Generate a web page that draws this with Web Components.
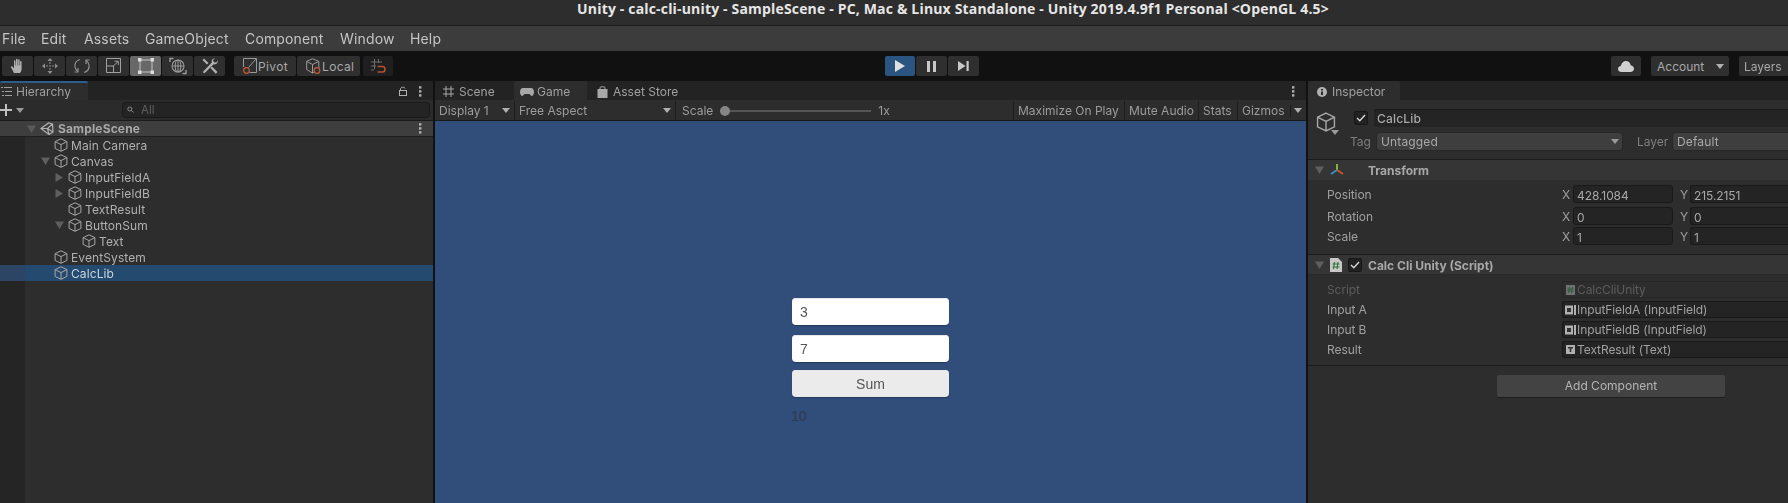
<!DOCTYPE html>
<html>
<head>
<meta charset="utf-8">
<title>Unity</title>
<style>
    html, body { margin: 0; padding: 0; background: #111; }
    body { width: 1788px; height: 503px; overflow: hidden; font: 12px Inter, sans-serif; color: #b0b0b0; }
    .panels { display: flex; height: 422px; background: #111; gap: 2px; }
    .panels, ui-menubar, ui-toolbar { filter: blur(.3px); }
</style>
</head>
<body>
<ui-titlebar>Unity - calc-cli-unity - SampleScene - PC, Mac &amp; Linux Standalone - Unity 2019.4.9f1 Personal &lt;OpenGL 4.5&gt;</ui-titlebar>
<ui-menubar></ui-menubar>
<ui-toolbar></ui-toolbar>
<div class="panels">
    <ui-hierarchy></ui-hierarchy>
    <ui-game></ui-game>
    <ui-inspector></ui-inspector>
</div>
<script>
"use strict";

const cube = (size = 14, color = "#b0b0b0") => `<svg style="display:block" width="${size}" height="${size}" viewBox="0 0 14 14" fill="none" stroke="${color}" stroke-width="1"><path d="M7 .8 12.9 3.6V10.4L7 13.3 1.1 10.4V3.6Z M1.1 3.6 7 6.6 12.9 3.6 M7 6.6V13.3"/></svg>`;
const arrowDown = (color = "#5f5f5f") => `<svg width="9" height="8" viewBox="0 0 9 8"><path d="M0 .5H9L4.5 8Z" fill="${color}"/></svg>`;
const arrowRight = `<svg width="8" height="9" viewBox="0 0 8 9"><path d="M.5 0V9L8 4.5Z" fill="#5f5f5f"/></svg>`;
const caret = (color = "#b0b0b0") => `<svg width="8" height="5" viewBox="0 0 8 5"><path d="M0 0H8L4 5Z" fill="${color}"/></svg>`;
const dots = `<svg width="3" height="11" viewBox="0 0 3 11" fill="#b0b0b0"><rect width="2.4" height="2.4" y=".2"/><rect width="2.4" height="2.4" y="4.2"/><rect width="2.4" height="2.4" y="8.2"/></svg>`;
const check = `<svg width="10" height="8" viewBox="0 0 10 8" fill="none" stroke="#d8d8d8" stroke-width="1.4"><path d="M1 4 3.8 6.8 9 1"/></svg>`;

const tools = {
    hand: `<svg width="18" height="18" viewBox="0 0 18 18" fill="#b0b0b0"><path d="M5 16 2 10.2c-.4-.9.8-1.5 1.4-.7L5 11.3V4c0-1 1.5-1 1.5 0v4.5H7V2.6c0-1 1.6-1 1.6 0v5.9h.5V3c0-1 1.5-1 1.5 0v5.5h.5V4.7c0-1 1.5-1 1.5 0V12c0 2-.8 3-1.6 4Z"/></svg>`,
    move: `<svg width="18" height="18" viewBox="0 0 18 18" fill="#8f8f8f"><path d="M9 1 11.5 4H6.5ZM9 17 6.5 14H11.5ZM1 9 4 6.5V11.5ZM17 9 14 11.5V6.5Z"/><path d="M8.5 5H9.5V7H8.5ZM8.5 8H9.5V10H8.5ZM8.5 11H9.5V13H8.5ZM5 8.5H7V9.5H5ZM11 8.5H13V9.5H11Z"/></svg>`,
    rotate: `<svg width="18" height="18" viewBox="0 0 18 18" fill="none" stroke="#8f8f8f" stroke-width="1.2"><path d="M7 2.5C3.5 3.5 1.5 6.5 2 10c.3 2 1.4 3.5 3 4.5"/><path d="M11 15.5c3.5-1 5.5-4 5-7.5-.3-2-1.4-3.5-3-4.5"/><path d="M5 11v4H1.5M13 7V3h3.5"/></svg>`,
    scale: `<svg width="16" height="16" viewBox="0 0 16 16" fill="none" stroke="#a0a0a0" stroke-width="1"><path d="M.5 .5H14.5V14.5H.5Z"/><path d="M.5 8H7.5V14.5"/><path d="M7 8.5 12 3.5M8.5 3.2H12.3V7"/></svg>`,
    rect: `<svg width="16" height="16" viewBox="0 0 16 16" fill="#dcdcdc"><path d="M2 1.5h12v1H2zM2 13.5h12v1H2zM1.5 2h1v12h-1zM13.5 2h1v12h-1z" opacity=".8"/><rect width="3.5" height="3.5"/><rect x="12.5" width="3.5" height="3.5"/><rect y="12.5" width="3.5" height="3.5"/><rect x="12.5" y="12.5" width="3.5" height="3.5"/></svg>`,
    transform: `<svg width="18" height="18" viewBox="0 0 18 18" fill="none" stroke="#9a9a9a" stroke-width="1.1"><circle cx="9" cy="9" r="6"/><path d="M3 9H15M9 3V15"/><ellipse cx="9" cy="9" rx="2.8" ry="6"/><path d="M1 5V1.5H4.5M17 13V16.5H13.5" stroke-width="1.4"/></svg>`,
    custom: `<svg width="18" height="18" viewBox="0 0 18 18" fill="#b0b0b0"><path d="M2.5 15.8 1.8 15l9-9.500c-.5-1.800.3-3.800 3-4.200l-1.800 2 1.200 2.300 2.300-.3 1.300-2c.5 2.600-1.800 4.800-4.200 4L3.500 16.200Z"/><path d="M3 1.5 7.5 6 6 7.5 1.5 3ZM11 9.5 16.5 15l-1.800 1.800L9.500 11Z"/></svg>`,
    pivot: `<svg width="14" height="16" viewBox="0 0 14 16" fill="none"><path d="M.5 9V.5H13.5V14.5H6.5" stroke="#9a9a9a"/><path d="M5.5 9.5 13 1" stroke="#9a9a9a"/><circle cx="3.5" cy="12.5" r="2.8" stroke="#c65a33" stroke-width="1.2"/></svg>`,
    local: `<svg width="15" height="16" viewBox="0 0 15 16" fill="none" stroke="#9a9a9a"><path d="M6.5 .7 12.8 3.4V11.500L6.5 15 .7 11.500V3.400ZM.7 3.400 6.5 6.500 12.800 3.400M6.500 6.500V15"/><circle cx="11" cy="12.500" r="2.800" fill="#2f2f2f" stroke="#c65a33" stroke-width="1.200"/></svg>`,
    snap: `<svg width="15" height="15" viewBox="0 0 15 15" fill="none"><path d="M3.5 0V10M7.5 0V4M0 3H11M0 7H5M0 11H3" stroke="#6e6e6e"/><path d="M6.5 7.5H11.5C14.8 7.5 14.8 13 11.5 13H6.5" stroke="#b5502c" stroke-width="1.6"/></svg>`,
    play: `<svg width="10" height="12" viewBox="0 0 10 12"><path d="M0 0V12L10 6Z" fill="#e0e0e0"/></svg>`,
    pause: `<svg width="9" height="11" viewBox="0 0 9 11" fill="#c8c8c8"><rect width="3" height="11"/><rect x="6" width="3" height="11"/></svg>`,
    step: `<svg width="11" height="10" viewBox="0 0 11 10" fill="#c8c8c8"><path d="M0 0V10L7.5 5Z"/><rect x="8.5" width="2.2" height="10"/></svg>`,
    cloud: `<svg width="16" height="11" viewBox="0 0 16 11"><path d="M3.5 11C1.5 11 0 9.7 0 8s1.2-2.9 2.8-3C3.3 2 5.5 0 8 0s4.300 1.700 4.700 4.200C14.600 4.400 16 5.900 16 7.700 16 9.600 14.500 11 12.500 11Z" fill="#d0d0d0"/></svg>`
};

class UiTitlebar extends HTMLElement {
    constructor() {
        super();
        this.attachShadow({mode: "open"}).innerHTML = `
            <style>
                :host { display: block; height: 25px; background: #2d2d2d; padding-left: 118px; border-bottom: 1px solid #1c1c1c; }
                span { display: block; text-align: center; font: 700 14px/17px "Open Sans", sans-serif; letter-spacing: .17px; color: #e6e6e6; }
            </style>
            <span><slot></slot></span>`;
    }
}

class UiMenubar extends HTMLElement {
    constructor() {
        super();
        const items = [["File", 39], ["Edit", 43], ["Assets", 61], ["GameObject", 100], ["Component", 95], ["Window", 70], ["Help", 50]];
        this.attachShadow({mode: "open"}).innerHTML = `
            <style>
                :host { display: flex; height: 25px; background: #3c3c3c; padding-left: 2px; font: 14px/25px Inter, sans-serif; letter-spacing: .15px; color: #c4c4c4; }
            </style>
            ${items.map(i => `<span style="width:${i[1]}px">${i[0]}</span>`).join("")}`;
    }
}

class UiToolButton extends HTMLElement {
    static get observedAttributes() { return ["w"]; }
    constructor() {
        super();
        this.attachShadow({mode: "open"}).innerHTML = `
            <style>
                :host { display: flex; flex: none; align-items: center; justify-content: center; height: 20px; box-sizing: border-box; background: var(--bg, #2f2f2f); border-radius: 2px; overflow: hidden; color: #a8a8a8; font: 12px Inter, sans-serif; }
                :host([text]) { justify-content: flex-start; padding-left: 9px; gap: 1px; letter-spacing: .35px; }
            </style>
            <slot></slot>`;
    }
    attributeChangedCallback(name, oldVal, newVal) { this.style.width = newVal + "px"; }
}

class UiToolbar extends HTMLElement {
    constructor() {
        super();
        const btn = (w, icon, bg = "", attr = "") => `<ui-tool-button w="${w}" ${attr} style="${bg ? `--bg:${bg}` : ""}">${icon}</ui-tool-button>`;
        this.attachShadow({mode: "open"}).innerHTML = `
            <style>
                :host { display: flex; align-items: center; height: 30px; background: #111; padding-left: 2px; box-sizing: border-box; }
                .g { display: flex; gap: 1px; flex: none; }
                .sp { flex: none; }
            </style>
            <div class="g">
                ${btn(31, tools.hand)}${btn(31, tools.move)}${btn(31, tools.rotate)}${btn(31, tools.scale)}${btn(31, tools.rect, "#686868")}${btn(31, tools.transform)}${btn(31, tools.custom)}
            </div>
            <div class="sp" style="width:9px"></div>
            <div class="g">
                ${btn(62, tools.pivot + "Pivot", "", "text")}${btn(63, tools.local + "Local", "", "text")}
                <div class="sp" style="width:1px"></div>
                ${btn(30, tools.snap, "#1f1f1f")}
            </div>
            <div class="sp" style="width:492px"></div>
            <div class="g">
                ${btn(30, tools.play, "#2a5580")}${btn(31, tools.pause)}${btn(31, tools.step)}
            </div>
            <div class="sp" style="width:632px"></div>
            ${btn(30, tools.cloud)}
            <div class="sp" style="width:10px"></div>
            ${btn(78, `<span style="flex:1;padding-left:6px">Account</span>${caret()}<span style="width:5px"></span>`)}
            <div class="sp" style="width:10px"></div>
            ${btn(50, `<span style="flex:1;padding-left:5px">Layers</span>`)}`;
    }
}

class UiTabs extends HTMLElement {
    constructor() {
        super();
        this.attachShadow({mode: "open"}).innerHTML = `
            <style>
                :host { display: flex; height: 19px; background: #232323; align-items: flex-end; flex: none; }
                .end { margin-left: auto; display: flex; align-items: center; height: 19px; padding-top: 1px; box-sizing: border-box; }
            </style>
            <slot></slot>
            <div class="end"><slot name="end"></slot></div>`;
    }
}

class UiTab extends HTMLElement {
    constructor() {
        super();
        this.attachShadow({mode: "open"}).innerHTML = `
            <style>
                :host { display: flex; align-items: center; gap: 5px; height: 19px; box-sizing: border-box; padding-top: 2px; color: #a0a0a0; font: 12px Inter, sans-serif; border-radius: 2px 2px 0 0; }
                :host([active]) { background: #2d2d2d; }
                :host([accent]) { border-top: 2px solid #2b5d8f; padding-top: 0; }
            </style>
            <slot></slot>`;
    }
}

class UiTreeRow extends HTMLElement {
    constructor() {
        super();
        const depth = +this.getAttribute("depth");
        const open = this.getAttribute("open");
        const tri = open === "down" ? arrowDown() : open === "right" ? arrowRight : "";
        this.attachShadow({mode: "open"}).innerHTML = `
            <style>
                :host { display: flex; align-items: center; height: 16px; font: 12px Inter, sans-serif; color: #b0b0b0; padding-left: ${41 + 14 * depth}px; }
                :host([selected]) { background: linear-gradient(to right, #2c4565 25px, #244b6f 25px); color: #c8d4de; }
                .t { width: 13px; display: flex; align-items: center; }
                .i { width: 14px; height: 14px; margin-right: 3px; }
                span { letter-spacing: .1px; }
            </style>
            <div class="t">${tri}</div>
            <div class="i">${cube(14, "#a6a6a6")}</div>
            <span><slot></slot></span>`;
    }
}

class UiHierarchy extends HTMLElement {
    constructor() {
        super();
        this.attachShadow({mode: "open"}).innerHTML = `
            <style>
                :host { display: flex; flex-direction: column; width: 433px; flex: none; background: #2d2d2d; }
                ui-tab { width: 88px; padding-left: 1px; box-sizing: border-box; gap: 4px; }
                .lock { display: flex; gap: 11px; padding-right: 11px; align-items: center; }
                .bar { display: flex; align-items: center; height: 21px; box-sizing: border-box; background: #2b2b2b; border-bottom: 1px solid #1b1b1b; flex: none; }
                .plus { display: flex; gap: 4px; align-items: center; width: 122px; flex: none; }
                .search { width: 308px; height: 16px; box-sizing: border-box; background: #242424; border: 1px solid #191919; border-radius: 4px; display: flex; align-items: center; color: #5e5e5e; font-size: 11.5px; padding-left: 4px; gap: 5px; }
                .scene { display: flex; align-items: center; height: 16px; box-sizing: border-box; background: #3e3e3e; border-bottom: 1px solid #1e1e1e; font-weight: 700; color: #a8a8a8; padding-left: 27px; flex: none; letter-spacing: .15px; }
                .scene .t { width: 13px; display: flex; }
                .scene .d { margin-left: auto; padding-right: 11px; display: flex; }
                .list { flex: 1; background: linear-gradient(to right, #252525 25px, #2d2d2d 25px); }
            </style>
            <ui-tabs>
                <ui-tab active accent>
                    <svg width="11" height="9" viewBox="0 0 11 9" fill="#a0a0a0"><rect width="2" height="1" /><rect x="3" width="8" height="1"/><rect x="1" y="4" width="2" height="1"/><rect x="4" y="4" width="7" height="1"/><rect x="1" y="8" width="2" height="1"/><rect x="4" y="8" width="7" height="1"/></svg>
                    Hierarchy
                </ui-tab>
                <div slot="end" class="lock">
                    <svg width="9" height="10" viewBox="0 0 9 10" fill="none" stroke="#b0b0b0"><rect x=".5" y="4.5" width="7" height="5"/><path d="M1.5 4.5V3C1.5 1 5.5 .5 6 2.5"/></svg>
                    ${dots}
                </div>
            </ui-tabs>
            <div class="bar">
                <div class="plus"><svg width="12" height="12" viewBox="0 0 12 12" fill="#c0c0c0"><path d="M5 0H7V5H12V7H7V12H5V7H0V5H5Z"/></svg>${caret("#9a9a9a")}</div>
                <div class="search">
                    <svg width="9" height="8" viewBox="0 0 9 8" fill="none" stroke="#8c8c8c"><circle cx="2.8" cy="3" r="2"/><path d="M4.5 4.5 6.5 6.5"/></svg>
                    All
                </div>
            </div>
            <div class="scene">
                <div class="t">${arrowDown("#5a5a5a")}</div>
                <svg width="14" height="13" viewBox="0 0 14 13" fill="none" stroke="#b0b0b0" stroke-width="1.2"><path d="M1 6.5 8.5 1 12.5 2 13 10 9 12.5ZM1 6.5H7.5L12.5 2M7.5 6.5 9 12.5M7.5 6.5 13 10"/></svg>
                <span style="margin-left:4px">SampleScene</span>
                <div class="d">${dots}</div>
            </div>
            <div class="list">
                <ui-tree-row depth="0">Main Camera</ui-tree-row>
                <ui-tree-row depth="0" open="down">Canvas</ui-tree-row>
                <ui-tree-row depth="1" open="right">InputFieldA</ui-tree-row>
                <ui-tree-row depth="1" open="right">InputFieldB</ui-tree-row>
                <ui-tree-row depth="1">TextResult</ui-tree-row>
                <ui-tree-row depth="1" open="down">ButtonSum</ui-tree-row>
                <ui-tree-row depth="2">Text</ui-tree-row>
                <ui-tree-row depth="0">EventSystem</ui-tree-row>
                <ui-tree-row depth="0" selected>CalcLib</ui-tree-row>
            </div>`;
    }
}

class UiGameWidget extends HTMLElement {
    constructor() {
        super();
        this.attachShadow({mode: "open"}).innerHTML = `
            <style>
                :host { display: flex; align-items: center; width: 157px; height: 27px; box-sizing: border-box; background: #fff; border-radius: 4px; padding-left: 8px; font: 14px "Liberation Sans", sans-serif; color: #555; box-shadow: inset 0 1px 0 #e6e6e6, 0 1px 1px #26395a; }
                :host([button]) { background: #ebebeb; justify-content: center; padding: 0; color: #555; }
            </style>
            <slot></slot>`;
    }
}

class UiGame extends HTMLElement {
    constructor() {
        super();
        this.attachShadow({mode: "open"}).innerHTML = `
            <style>
                :host { display: flex; flex-direction: column; width: 871px; flex: none; background: #232323; }
                .bar { display: flex; height: 21px; padding-top: 1px; background: #2d2d2d; flex: none; font: 12px/20px Inter, sans-serif; color: #9c9c9c; border-bottom: 1px solid #1a1a1a; box-sizing: border-box; }
                .c { display: flex; align-items: center; box-sizing: border-box; padding-left: 4px; border-right: 1px solid #1c1c1c; flex: none; white-space: nowrap; }
                .c > svg { margin-left: auto; margin-right: 4px; }
                .slider { flex: none; width: 150px; height: 2px; background: #555; position: relative; margin: 0 7px 0 8px; align-self: center; }
                .thumb { position: absolute; left: -1px; top: -4px; width: 10px; height: 10px; border-radius: 50%; background: #858585; }
                .giz { width: 1px; height: 12px; background: #1c1c1c; margin-left: 5px; }
                .view { flex: 1; background: #314d79; display: flex; flex-direction: column; align-items: flex-start; padding: 177px 0 0 357px; }
                ui-game-widget + ui-game-widget { margin-top: 10px; }
                .sum { margin-top: 8px !important; }
                .res { margin: 11px 0 0 -1px; font: 14px "Liberation Sans", sans-serif; color: #2f3a4e; }
            </style>
            <ui-tabs>
                <ui-tab style="width:79px;padding-left:8px">
                    <svg width="11" height="11" viewBox="0 0 11 11" stroke="#a8a8a8" fill="none"><path d="M3 0V11M8 0V11M0 3H11M0 8H11"/></svg>Scene
                </ui-tab>
                <ui-tab active style="width:73px;padding-left:6px;gap:3px">
                    <svg width="14" height="8" viewBox="0 0 14 8" fill="#a8a8a8"><path d="M3 0H11C13 0 14 2 14 4C14 6 13 8 11.5 8L9.5 6H4.5L2.5 8C1 8 0 6 0 4C0 2 1 0 3 0Z"/></svg>Game
                </ui-tab>
                <ui-tab style="padding-left:10px">
                    <svg width="11" height="12" viewBox="0 0 11 12" fill="#a8a8a8"><path d="M.5 3H10.5V12H.5Z"/><path d="M3 3V1.5C3 .5 8 .5 8 1.5V3" fill="none" stroke="#a8a8a8"/></svg>Asset Store
                </ui-tab>
                <div slot="end" style="padding-right:11px;display:flex">${dots}</div>
            </ui-tabs>
            <div class="bar">
                <div class="c" style="width:80px">Display 1${caret()}</div>
                <div class="c" style="width:161px">Free Aspect${caret()}</div>
                <div class="c" style="width:336px;border:0;padding-left:6px">Scale
                    <div class="slider"><div class="thumb"></div></div>1x</div>
                <div class="c" style="margin-left:auto;width:112px;border-left:1px solid #1c1c1c">Maximize On Play</div>
                <div class="c" style="width:74px">Mute Audio</div>
                <div class="c" style="width:39px">Stats</div>
                <div class="c" style="width:68px;border:0">Gizmos<div class="giz"></div>${caret()}</div>
            </div>
            <div class="view">
                <ui-game-widget>3</ui-game-widget>
                <ui-game-widget>7</ui-game-widget>
                <ui-game-widget class="sum" button>Sum</ui-game-widget>
                <div class="res">10</div>
            </div>`;
    }
}

class UiProp extends HTMLElement {
    constructor() {
        super();
        this.attachShadow({mode: "open"}).innerHTML = `
            <style>
                :host { display: flex; align-items: flex-start; height: 20px; padding-left: 19px; font: 12px Inter, sans-serif; color: #a0a0a0; letter-spacing: -.08px; }
                :host([dim]) { color: #5c5c5c; }
                .l { width: 235px; flex: none; line-height: 17px; }
                .v { flex: 1; display: flex; align-items: center; gap: 2px; height: 17px; box-sizing: border-box; background: #242424; border: 1px solid #191919; border-right: 0; border-radius: 3px 0 0 3px; padding-left: 2px; white-space: nowrap; }
                :host([dim]) .v { background: #2d2d2d; border-color: #262626; }
            </style>
            <div class="l"><slot name="label"></slot></div>
            <div class="v"><slot></slot></div>`;
    }
}

class UiVector extends HTMLElement {
    constructor() {
        super();
        const [x, y] = this.getAttribute("values").split(",");
        this.attachShadow({mode: "open"}).innerHTML = `
            <style>
                :host { display: flex; align-items: flex-start; height: 20px; padding-left: 19px; font: 12px/18px Inter, sans-serif; color: #a0a0a0; letter-spacing: -.08px; }
                .l { width: 235px; flex: none; padding-top: 1px; }
                .a { width: 11px; flex: none; padding-top: 1px; }
                .f { height: 18px; line-height: 17px; padding-top: 1px; background: #242424; border: 1px solid #191919; border-radius: 3px; padding-left: 3px; box-sizing: border-box; color: #a8a8a8; }
                .x { width: 100px; flex: none; margin-right: 7px; }
                .y { flex: 1; border-right: 0; border-radius: 3px 0 0 3px; margin-left: -1px; }
            </style>
            <div class="l"><slot></slot></div>
            <div class="a">X</div><div class="f x">${x}</div>
            <div class="a">Y</div><div class="f y">${y}</div>`;
    }
}

class UiInspector extends HTMLElement {
    constructor() {
        super();
        const field = `<svg width="11" height="10" viewBox="0 0 11 10" style="margin-right:-1px"><rect width="8" height="9" y=".5" fill="#b0b0b0"/><rect x="2" y="3" width="4" height="4" fill="#333"/><rect x="9" width="2" height="10" fill="#b0b0b0"/></svg>`;
        this.attachShadow({mode: "open"}).innerHTML = `
            <style>
                :host { display: flex; flex-direction: column; flex: 1; min-width: 0; background: #2d2d2d; overflow: hidden; }
                ui-tab { width: 92px; padding-left: 9px; }
                .head { height: 60px; box-sizing: border-box; border-bottom: 1px solid #1b1b1b; display: flex; flex: none; }
                .icon { width: 46px; flex: none; padding: 12px 0 0 8px; box-sizing: border-box; position: relative; }
                .icon .dn { position: absolute; left: 23px; top: 30px; display: flex; }
                .rows { flex: 1; display: flex; flex-direction: column; min-width: 0; }
                .r1 { display: flex; align-items: center; height: 18px; margin-top: 9px; }
                .cb { width: 14px; height: 14px; box-sizing: border-box; flex: none; background: #212121; border: 1px solid #171717; border-radius: 2px; display: flex; align-items: center; justify-content: center; }
                .name { flex: 1; height: 18px; line-height: 19px; margin-left: 6px; background: #242424; border-radius: 3px 0 0 3px; padding-left: 3px; font-weight: 500; color: #a8a8a8; letter-spacing: .2px; box-shadow: inset 0 1px 0 #191919; }
                .r2 { display: flex; align-items: center; height: 17px; margin: 6px 0 0 -4px; color: #7e7e7e; }
                .drop { height: 17px; line-height: 17px; box-sizing: border-box; background: #3e3e3e; border-radius: 3px; padding-left: 4px; color: #a8a8a8; display: flex; align-items: center; box-shadow: 0 0 0 .5px #232323; letter-spacing: .15px; }
                .drop svg { margin-left: auto; margin-right: 3px; }
                .comp { display: flex; align-items: center; height: 20px; box-sizing: border-box; background: #353535; font-weight: 700; color: #a8a8a8; padding-left: 7px; flex: none; }
                .sep { border-bottom: 1px solid #1b1b1b; flex: none; }
                .add { padding: 9px 0 0 189px; }
                .btn { width: 228px; height: 22px; line-height: 22px; text-align: center; background: #434343; border-radius: 2px; color: #b4b4b4; box-shadow: 0 1px 0 #1e1e1e; }
                .ml1 { margin-left: 1px; }
            </style>
            <ui-tabs>
                <ui-tab active>
                    <svg width="10" height="10" viewBox="0 0 10 10"><circle cx="5" cy="5" r="5" fill="#b0b0b0"/><path d="M4 2H6V3.5H4ZM4 4.5H6V8H4Z" fill="#2d2d2d"/></svg>Inspector
                </ui-tab>
            </ui-tabs>
            <div class="head">
                <div class="icon">${cube(20, "#a6a6a6")}<div class="dn">${caret("#9a9a9a")}</div></div>
                <div class="rows">
                    <div class="r1"><div class="cb">${check}</div><div class="name">CalcLib</div></div>
                    <div class="r2">
                        <span style="width:27px">Tag</span>
                        <div class="drop" style="width:245px">Untagged${caret("#9a9a9a")}</div>
                        <span style="margin-left:15px;width:36px">Layer</span>
                        <div class="drop" style="flex:1;border-radius:3px 0 0 3px">Default</div>
                    </div>
                </div>
            </div>
            <div class="comp">
                ${arrowDown()}
                <svg style="margin-left:6px" width="14" height="12" viewBox="0 0 14 12" fill="none" stroke-width="2"><path d="M7 6V0" stroke="#7fb23a"/><path d="M7 6 1 10" stroke="#3a8ec4"/><path d="M7 6 13 10" stroke="#c9542c"/></svg>
                <span style="margin-left:24px">Transform</span>
            </div>
            <div style="padding:5px 0 7px" class="sep">
                <ui-vector values="428.1084,215.2151" style="height:22px">Position</ui-vector>
                <ui-vector values="0,0">Rotation</ui-vector>
                <ui-vector values="1,1">Scale</ui-vector>
            </div>
            <div class="comp" style="box-shadow:inset 0 -1px 0 #2a2a2a">
                ${arrowDown()}
                <svg style="margin-left:6px" width="12" height="14" viewBox="0 0 12 14"><path d="M0 0H8L12 4V14H0Z" fill="#c8c8c8"/><path d="M4.5 4 3.5 11M8 4 7 11M2.5 6H9.5M2.5 9H9.5" stroke="#2f7a3b" stroke-width="1.2"/></svg>
                <div class="cb" style="margin-left:6px">${check}</div>
                <span style="margin-left:6px">Calc Cli Unity (Script)</span>
            </div>
            <div style="padding:6px 0 4px" class="sep">
                <ui-prop dim><span slot="label">Script</span>
                    <svg class="ml1" style="margin-left:1px" width="9" height="10" viewBox="0 0 9 10"><rect width="9" height="10" fill="#707070"/><path d="M3.5 2 2.5 8M6.5 2 5.5 8M1.5 4H7.5M1.5 6H7.5" stroke="#2f5f3a"/></svg>CalcCliUnity
                </ui-prop>
                <ui-prop><span slot="label">Input A</span>${field}InputFieldA (InputField)</ui-prop>
                <ui-prop><span slot="label">Input B</span>${field}InputFieldB (InputField)</ui-prop>
                <ui-prop><span slot="label">Result</span>
                    <svg style="margin-left:1px" width="9" height="9" viewBox="0 0 9 9"><rect width="9" height="9" fill="#b0b0b0"/><path d="M2 2H7V3.5H5.3V7H3.7V3.5H2Z" fill="#333"/></svg>TextResult (Text)
                </ui-prop>
            </div>
            <div class="add"><div class="btn">Add Component</div></div>`;
    }
}

customElements.define("ui-titlebar", UiTitlebar);
customElements.define("ui-menubar", UiMenubar);
customElements.define("ui-tool-button", UiToolButton);
customElements.define("ui-toolbar", UiToolbar);
customElements.define("ui-tabs", UiTabs);
customElements.define("ui-tab", UiTab);
customElements.define("ui-tree-row", UiTreeRow);
customElements.define("ui-hierarchy", UiHierarchy);
customElements.define("ui-game-widget", UiGameWidget);
customElements.define("ui-game", UiGame);
customElements.define("ui-prop", UiProp);
customElements.define("ui-vector", UiVector);
customElements.define("ui-inspector", UiInspector);
</script>
</body>
</html>
